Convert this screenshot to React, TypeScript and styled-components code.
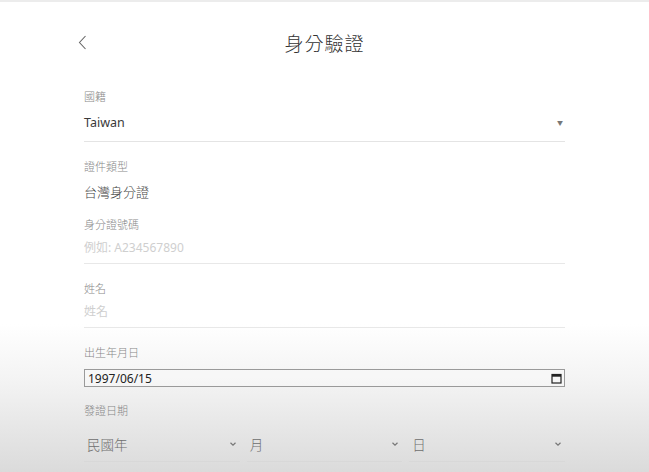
import styled, { createGlobalStyle } from "styled-components";

const GlobalStyle = createGlobalStyle`
    html, body {
        margin: 0;
        padding: 0;
    }
    body {
        font-family: "Noto Sans", "Noto Sans CJK TC", sans-serif;
        color: #333;
    }
`

const Page = styled.div`
    min-height: 472px;
    border-top: 2px solid #ececec;
    box-sizing: border-box;
    background: linear-gradient(180deg, #ffffff 0px, #ffffff 322px, #f3f3f3 380px, #dadada 472px);
`

const Header = styled.header`
    max-width: 493px;
    height: 80px;
    margin: 0 auto;
    display: grid;
    grid-template-columns: 40px 1fr 40px;
    align-items: center;
`

const BackButton = styled.button`
    border: 0;
    background: none;
    padding: 0;
    width: 12px;
    height: 16px;
    display: flex;
    align-items: center;
    cursor: pointer;
`

const Title = styled.h1`
    margin: 0;
    text-align: center;
    font-size: 19px;
    font-weight: 300;
    letter-spacing: 1px;
    color: #333;
    font-family: "Noto Sans CJK TC", "Noto Sans", sans-serif;
`

const Form = styled.form`
    max-width: 481px;
    margin: 0 auto;
    padding-top: 6px;
`

const Label = styled.div<{ $gap?: number }>`
    font-family: "Noto Sans CJK TC", sans-serif;
    font-size: 11px;
    font-weight: 300;
    line-height: 16px;
    color: #888;
    margin-top: ${p => p.$gap ?? 0}px;
`

const SelectRow = styled.div`
    margin-top: 4px;
    height: 34px;
    box-sizing: border-box;
    display: flex;
    justify-content: space-between;
    line-height: 30px;
    font-size: 12.5px;
    color: #3a3a3a;
    border-bottom: 1px solid #e4e4e4;
`

const Caret = styled.span`
    font-size: 6px;
    color: #777;
    padding-right: 2px;
`

const Value = styled.div`
    margin-top: 8px;
    line-height: 20px;
    font-size: 13px;
    font-weight: 300;
    color: #444;
    font-family: "Noto Sans CJK TC", sans-serif;
`

const TextInput = styled.input`
    display: block;
    width: 100%;
    margin-top: 4px;
    padding: 0 0 5px;
    height: 28px;
    box-sizing: border-box;
    border: 0;
    border-bottom: 1px solid #e8e8e8;
    background: transparent;
    outline: none;
    font-family: "Noto Sans", "Noto Sans CJK TC", sans-serif;
    font-size: 12px;
    line-height: 22px;
    color: #333;
    &::placeholder {
        color: #cfcfcf;
    }
`

const DateBox = styled.div`
    margin-top: 9px;
    height: 18px;
    box-sizing: border-box;
    border: 1px solid #9a9a9a;
    display: flex;
    align-items: center;
    justify-content: space-between;
    padding: 0 2px 0 3px;
    font-family: "Noto Sans", sans-serif;
    font-size: 12px;
    color: #222;
    background: rgba(255, 255, 255, 0.25);
`

const SelectGrid = styled.div`
    margin-top: 10px;
    display: grid;
    grid-template-columns: repeat(3, 1fr);
    gap: 7px;
`

const Select = styled.div`
    padding: 4px 3px 5px 3px;
    line-height: 24px;
    display: flex;
    justify-content: space-between;
    align-items: center;
    font-family: "Noto Sans CJK TC", sans-serif;
    font-size: 13.5px;
    font-weight: 300;
    color: #6e6e6e;
    border-bottom: 1px solid #d8d8d8;
`

function ChevronDown() {
    return (
        <svg width="8" height="6" viewBox="0 0 8 6">
            <path d="M1.5 1.8 L4 4.2 L6.5 1.8" fill="none" stroke="#777" strokeWidth="1.2" />
        </svg>
    )
}

const selects = ['民國年', '月', '日']

export default function App() {
    return (
        <Page>
            <GlobalStyle />
            <Header>
                <BackButton type="button" aria-label="back">
                    <svg width="9" height="15" viewBox="0 0 9 15">
                        <path d="M7.5 1 L1.5 7.5 L7.5 14" fill="none" stroke="#666" strokeWidth="1.1" />
                    </svg>
                </BackButton>
                <Title>身分驗證</Title>
                <span />
            </Header>
            <Form onSubmit={e => e.preventDefault()}>
                <Label>國籍</Label>
                <SelectRow>
                    <span>Taiwan</span>
                    <Caret>▼</Caret>
                </SelectRow>

                <Label $gap={16}>證件類型</Label>
                <Value>台灣身分證</Value>

                <Label $gap={14}>身分證號碼</Label>
                <TextInput placeholder="例如: A234567890" />

                <Label $gap={16}>姓名</Label>
                <TextInput placeholder="姓名" />

                <Label $gap={16}>出生年月日</Label>
                <DateBox>
                    <span>1997/06/15</span>
                    <svg width="11" height="11" viewBox="0 0 11 11">
                        <rect x="1" y="1.5" width="9" height="8.5" fill="none" stroke="#222" strokeWidth="1.2" />
                        <rect x="1" y="1.5" width="9" height="2.2" fill="#222" />
                    </svg>
                </DateBox>

                <Label $gap={15}>發證日期</Label>
                <SelectGrid>
                    {
                        selects.map(item => {
                            return (
                                <Select key={item}>
                                    <span>{item}</span>
                                    <ChevronDown />
                                </Select>
                            )
                        })
                    }
                </SelectGrid>
            </Form>
        </Page>
    )
}
